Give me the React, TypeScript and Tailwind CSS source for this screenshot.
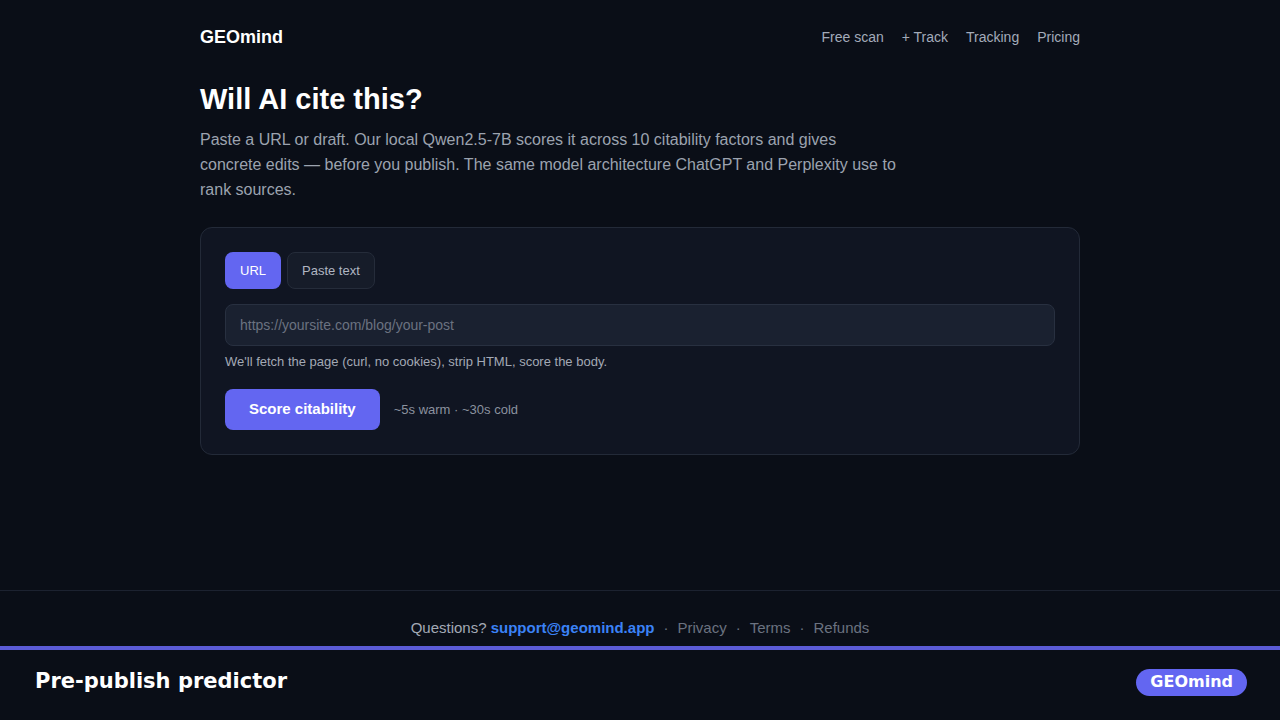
import { useState } from 'react';

export default function App() {
  const [mode, setMode] = useState<'url' | 'text'>('url');

  return (
    <div className="min-h-screen flex flex-col bg-[#0a0e17] text-gray-100 font-['Liberation_Sans',Arial,sans-serif]">
      <div className="flex-1 flex flex-col">
        <div className="w-[880px] mx-auto">
          <header className="flex items-center justify-between py-6">
            <span className="text-[18px] leading-[26px] font-bold text-white">GEOmind</span>
            <nav className="flex gap-[18px] text-[14px] text-[#a3abba]">
              <a href="#">Free scan</a>
              <a href="#">+ Track</a>
              <a href="#">Tracking</a>
              <a href="#">Pricing</a>
            </nav>
          </header>

          <h1 className="mt-[7px] text-[29px] leading-[36px] font-bold text-white">Will AI cite this?</h1>
          <p className="mt-[10px] max-w-[700px] text-[16px] leading-[25px] text-[#9ca3af]">
            Paste a URL or draft. Our local Qwen2.5-7B scores it across 10 citability factors and gives
            concrete edits — before you publish. The same model architecture ChatGPT and Perplexity use to
            rank sources.
          </p>

          <div className="mt-[25px] rounded-xl border border-[#232a38] bg-[#101522] p-6">
            <div className="flex gap-1.5">
              <button
                onClick={() => setMode('url')}
                className={
                  mode === 'url'
                    ? 'h-[37px] px-[15px] rounded-lg bg-[#6366f1] text-white text-[13px]'
                    : 'h-[37px] px-[15px] rounded-lg bg-[#161c29] border border-[#252c3a] text-[#b0b6c2] text-[13px]'
                }
              >
                URL
              </button>
              <button
                onClick={() => setMode('text')}
                className={
                  mode === 'text'
                    ? 'h-[37px] px-[15px] rounded-lg bg-[#6366f1] text-white text-[13px]'
                    : 'h-[37px] px-[14px] rounded-lg bg-[#161c29] border border-[#252c3a] text-[#b0b6c2] text-[13px]'
                }
              >
                Paste text
              </button>
            </div>

            <input
              type="text"
              placeholder="https://yoursite.com/blog/your-post"
              className="mt-[15px] block w-full h-[42px] rounded-lg border border-[#283040] bg-[#1a2130] px-[14px] text-[14px] text-gray-200 placeholder:text-[#6b7280] outline-none"
            />
            <p className="mt-[7px] text-[13px] leading-[18px] text-[#a3a9b5]">
              We'll fetch the page (curl, no cookies), strip HTML, score the body.
            </p>

            <div className="mt-[18px] flex items-center gap-[14px]">
              <button className="h-[41px] px-6 rounded-lg bg-[#6366f1] text-white text-[15px] font-bold">
                Score citability
              </button>
              <span className="text-[13px] text-[#8b929f]">~5s warm · ~30s cold</span>
            </div>
          </div>
        </div>
      </div>

      <footer className="border-t border-[#1c2230] pt-[26px] pb-[7px] text-center text-[15px] leading-[22px]">
        <span className="text-[#a3a9b5]">Questions? </span>
        <a href="#" className="font-bold text-[#3b82f6]">support@geomind.app</a>
        <span className="text-[#6b7280] mx-[9px]">·</span>
        <a href="#" className="text-[#6b7280]">Privacy</a>
        <span className="text-[#6b7280] mx-[9px]">·</span>
        <a href="#" className="text-[#6b7280]">Terms</a>
        <span className="text-[#6b7280] mx-[9px]">·</span>
        <a href="#" className="text-[#6b7280]">Refunds</a>
      </footer>

      <div className="border-t-4 border-[#5b5bd6] bg-[#0a0e17] h-[74px] pb-[6px] flex items-center justify-between pl-[35px] pr-[33px] font-['DejaVu_Sans',sans-serif]">
        <span className="text-[21px] font-bold text-white">Pre-publish predictor</span>
        <span className="h-[27px] px-[14px] rounded-full bg-[#6366f1] text-white text-[16px] font-bold flex items-center">
          GEOmind
        </span>
      </div>
    </div>
  );
}
